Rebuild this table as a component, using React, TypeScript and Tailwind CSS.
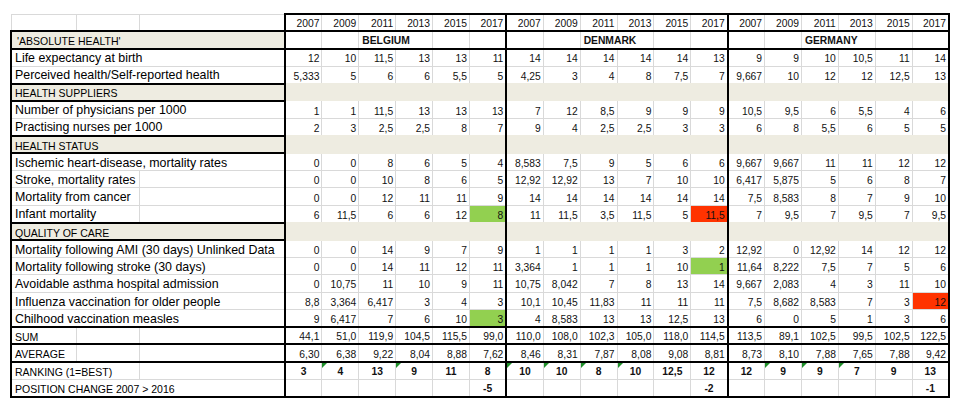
import React from 'react';

type Kind = 'header' | 'country' | 'section' | 'data' | 'sum' | 'avg' | 'rank' | 'pos';

type Row = {
  label: string;
  kind: Kind;
  split?: 'abc' | 'ab-c' | 'a-b-c';
  values?: string[];
  hl?: Record<number, 'g' | 'r'>;
};

const v = (s: string) => s.split(' ');
const years = ['2007', '2009', '2011', '2013', '2015', '2017'];

const rows: Row[] = [
  { label: '', kind: 'header', split: 'a-b-c', values: [...years, ...years, ...years] },
  { label: "'ABSOLUTE HEALTH'", kind: 'country' },
  { label: 'Life expectancy at birth', kind: 'data', values: v('12 10 11,5 13 13 11 14 14 14 14 14 13 9 9 10 10,5 11 14') },
  { label: 'Perceived health/Self-reported health', kind: 'data', values: v('5,333 5 6 6 5,5 5 4,25 3 4 8 7,5 7 9,667 10 12 12 12,5 13') },
  { label: 'HEALTH SUPPLIERS', kind: 'section' },
  { label: 'Number of physicians per 1000', kind: 'data', values: v('1 1 11,5 13 13 13 7 12 8,5 9 9 9 10,5 9,5 6 5,5 4 6') },
  { label: 'Practising nurses per 1000', kind: 'data', values: v('2 3 2,5 2,5 8 7 9 4 2,5 2,5 3 3 6 8 5,5 6 5 5') },
  { label: 'HEALTH STATUS', kind: 'section' },
  { label: 'Ischemic heart-disease, mortality rates', kind: 'data', values: v('0 0 8 6 5 4 8,583 7,5 9 5 6 6 9,667 9,667 11 11 12 12') },
  { label: 'Stroke, mortality rates', kind: 'data', split: 'ab-c', values: v('0 0 10 8 6 5 12,92 12,92 13 7 10 10 6,417 5,875 5 6 8 7') },
  { label: 'Mortality from cancer', kind: 'data', split: 'ab-c', values: v('0 0 12 11 11 9 14 14 14 14 14 14 7,5 8,583 8 7 9 10') },
  { label: 'Infant mortality', kind: 'data', split: 'ab-c', values: v('6 11,5 6 6 12 8 11 11,5 3,5 11,5 5 11,5 7 9,5 7 9,5 7 9,5'), hl: { 5: 'g', 11: 'r' } },
  { label: 'QUALITY OF CARE', kind: 'section' },
  { label: 'Mortality following AMI (30 days) Unlinked Data', kind: 'data', values: v('0 0 14 9 7 9 1 1 1 1 3 2 12,92 0 12,92 14 12 12') },
  { label: 'Mortality following stroke (30 days)', kind: 'data', values: v('0 0 14 11 12 11 3,364 1 1 1 10 1 11,64 8,222 7,5 7 5 6'), hl: { 11: 'g' } },
  { label: 'Avoidable asthma hospital admission', kind: 'data', values: v('0 10,75 11 10 9 11 10,75 8,042 7 8 13 14 9,667 2,083 4 3 11 10') },
  { label: 'Influenza vaccination for older people', kind: 'data', values: v('8,8 3,364 6,417 3 4 3 10,1 10,45 11,83 11 11 11 7,5 8,682 8,583 7 3 12'), hl: { 17: 'r' } },
  { label: 'Chilhood vaccination measles', kind: 'data', values: v('9 6,417 7 6 10 3 4 8,583 13 13 12,5 13 6 0 5 1 3 6'), hl: { 5: 'g' } },
  { label: 'SUM', kind: 'sum', split: 'a-b-c', values: v('44,1 51,0 119,9 104,5 115,5 99,0 110,0 108,0 102,3 105,0 118,0 114,5 113,5 89,1 102,5 99,5 102,5 122,5') },
  { label: 'AVERAGE', kind: 'avg', split: 'a-b-c', values: v('6,30 6,38 9,22 8,04 8,88 7,62 8,46 8,31 7,87 8,08 9,08 8,81 8,73 8,10 7,88 7,65 7,88 9,42') },
  { label: 'RANKING (1=BEST)', kind: 'rank', split: 'ab-c', values: v('3 4 13 9 11 8 10 10 8 10 12,5 12 12 9 9 7 9 13') },
  { label: 'POSITION CHANGE 2007 > 2016', kind: 'pos', values: ['', '', '', '', '', '-5', '', '', '', '', '', '-2', '', '', '', '', '', '-1'] },
];

const flagged = [1, 3, 6, 7, 8, 9, 13, 14, 15];
const countries = ['BELGIUM', 'DENMARK', 'GERMANY'];

const grid = 'border border-[#d9d9d9]';
const thickT = 'border-t-2 border-t-black';
const thickB = 'border-b-2 border-b-black';

const yearEdges = (i: number) =>
  [i % 6 === 0 ? 'border-l-2 border-l-black [border-left-style:solid]' : '', i === 17 ? 'border-r-2 border-r-black [border-right-style:solid]' : ''].join(' ');

const rowEdges = (k: Kind) => {
  if (k === 'header') return thickT;
  if (k === 'country') return `${thickT} ${thickB}`;
  if (k === 'sum') return `${thickT} ${thickB}`;
  if (k === 'avg' || k === 'pos') return thickB;
  return '';
};

const isCaps = (k: Kind) => k !== 'data';

function LabelCells({ row }: { row: Row }) {
  const k = row.kind;
  const txt = isCaps(k) ? 'text-[10.5px]' : 'text-[12.4px]';
  const base = `align-bottom pb-px leading-none whitespace-nowrap text-left ${txt}`;

  if (k === 'country' || k === 'section') {
    return (
      <td colSpan={3} className={`${base} bg-[#eeece1] border-2 border-black ${k === 'country' ? 'pl-[5px]' : 'pl-[3px]'}`}>
        {row.label}
      </td>
    );
  }

  const edge = k === 'header' ? '' : rowEdges(k);
  const left = k === 'header' ? '' : 'border-l-2 border-l-black';
  const right = 'border-r-2 border-r-black';
  const split = row.split ?? 'abc';

  if (split === 'abc') {
    return <td colSpan={3} className={`${base} ${grid} ${edge} ${left} ${right} pl-[3px]`}>{row.label}</td>;
  }
  if (split === 'ab-c') {
    return (
      <>
        <td colSpan={2} className={`${base} ${grid} ${edge} ${left} pl-[3px]`}>{row.label}</td>
        <td className={`${base} ${grid} ${edge} ${right}`}></td>
      </>
    );
  }
  return (
    <>
      <td className={`${base} ${grid} ${edge} ${left} pl-[3px]`}>{row.label}</td>
      <td className={`${base} ${grid} ${edge}`}></td>
      <td className={`${base} ${grid} ${edge} ${right}`}></td>
    </>
  );
}

function YearCells({ row }: { row: Row }) {
  const k = row.kind;
  const base = 'align-bottom pb-px leading-none whitespace-nowrap text-[10.3px] text-[#111]';

  if (k === 'section') {
    return (
      <>
        {Array.from({ length: 18 }).map((_, i) => (
          <td key={i} className={`${base} bg-[#eeece1] border border-double border-[#eeece1] ${yearEdges(i)}`}></td>
        ))}
      </>
    );
  }

  if (k === 'country') {
    return (
      <>
        {countries.map((c, ci) => {
          const o = ci * 6;
          const cls = `${base} ${grid} ${rowEdges(k)}`;
          return (
            <React.Fragment key={c}>
              <td className={`${cls} ${yearEdges(o)}`}></td>
              <td className={cls}></td>
              <td colSpan={2} className={`${cls} text-left pl-[3px] font-bold`}>{c}</td>
              <td className={cls}></td>
              <td className={`${cls} ${yearEdges(o + 5)}`}></td>
            </React.Fragment>
          );
        })}
      </>
    );
  }

  const centered = k === 'rank' || k === 'pos';
  return (
    <>
      {(row.values ?? []).map((val, i) => {
        const h = row.hl?.[i];
        const bg = h === 'g' ? 'bg-[#92d050]' : h === 'r' ? 'bg-[#ff3300]' : '';
        const align = centered ? 'text-center font-bold' : 'text-right pr-[2px]';
        return (
          <td key={i} className={`${base} ${grid} ${rowEdges(k)} ${yearEdges(i)} ${bg} ${align} relative`}>
            {k === 'rank' && flagged.includes(i) && (
              <span className="absolute top-0 left-0 w-0 h-0 border-t-[5px] border-t-[#1f8f2a] border-r-[5px] border-r-transparent" />
            )}
            {val}
          </td>
        );
      })}
    </>
  );
}

export default function App() {
  return (
    <div className="w-[960px] h-[413px] bg-white pl-[10px] pt-[13px] font-['Liberation_Sans',Arial,sans-serif] text-black overflow-hidden">
      <table className="border-collapse table-fixed w-[938px]">
        <colgroup>
          <col className="w-[65px]" />
          <col className="w-[63px]" />
          <col className="w-[146px]" />
          {Array.from({ length: 18 }).map((_, i) => (
            <col key={i} className="w-[36.9px]" />
          ))}
        </colgroup>
        <tbody>
          {rows.map((row, r) => (
            <tr key={r} className="h-[17.4px]">
              <LabelCells row={row} />
              <YearCells row={row} />
            </tr>
          ))}
        </tbody>
      </table>
    </div>
  );
}
